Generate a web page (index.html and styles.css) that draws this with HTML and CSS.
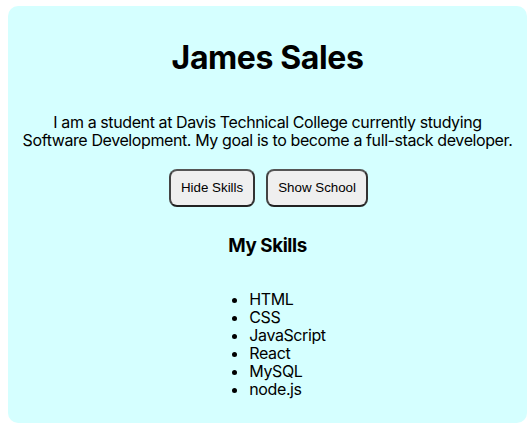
FILE: index.html
```html
<!DOCTYPE html>
<html lang="en">
<head>
<meta charset="utf-8">
<title>James Sales</title>
<link rel="stylesheet" href="styles.css">
</head>
<body>
<main class="card">
  <h1 class="name">James Sales</h1>
  <p class="bio">I am a student at Davis Technical College currently studying<br>Software Development. My goal is to become a full-stack developer.</p>
  <div class="actions">
    <button class="btn" type="button">Hide Skills</button>
    <button class="btn" type="button">Show School</button>
  </div>
  <h3 class="skills-title">My Skills</h3>
  <div class="skills-wrap">
    <ul class="skills">
      <li>HTML</li>
      <li>CSS</li>
      <li>JavaScript</li>
      <li>React</li>
      <li>MySQL</li>
      <li>node.js</li>
    </ul>
  </div>
</main>
</body>
</html>
```
FILE: styles.css
```css
html, body {
  margin: 0;
  padding: 0;
  background: #ffffff;
}
body {
  padding: 6px 3px 4px 8px;
  font-family: Inter, "Noto Sans", sans-serif;
  color: #000;
  letter-spacing: -0.025em;
}
.card {
  background: #d5ffff;
  border-radius: 10px;
  height: 417px;
  box-sizing: border-box;
  padding: 10px 0;
  text-align: center;
  display: flex;
  flex-direction: column;
  align-items: center;
}
.name {
  font-size: 32px;
  font-weight: 700;
  margin: 22px 0 0;
  line-height: 39px;
}
.bio {
  font-size: 16px;
  line-height: 18px;
  margin: 36px 0 0;
}
.actions {
  display: flex;
  gap: 11px;
  margin-top: 20px;
  padding-left: 2px;
}
.btn {
  font-family: "Liberation Sans", Arial, sans-serif;
  font-size: 13.33px;
  letter-spacing: 0;
  background: #efefef;
  color: #000;
  border: 2px solid #333;
  border-color: #555 #333 #222 #444;
  border-radius: 8px;
  padding: 0 10px;
  height: 38px;
  line-height: 14px;
}
.skills-title {
  font-size: 18.72px;
  font-weight: 700;
  line-height: 22px;
  margin: 28px 0 0;
}
.skills-wrap {
  margin-top: 33px;
}
.skills {
  display: inline-block;
  text-align: left;
  margin: 0;
  padding-left: 40px;
  font-size: 16px;
  line-height: 18px;
}
```
